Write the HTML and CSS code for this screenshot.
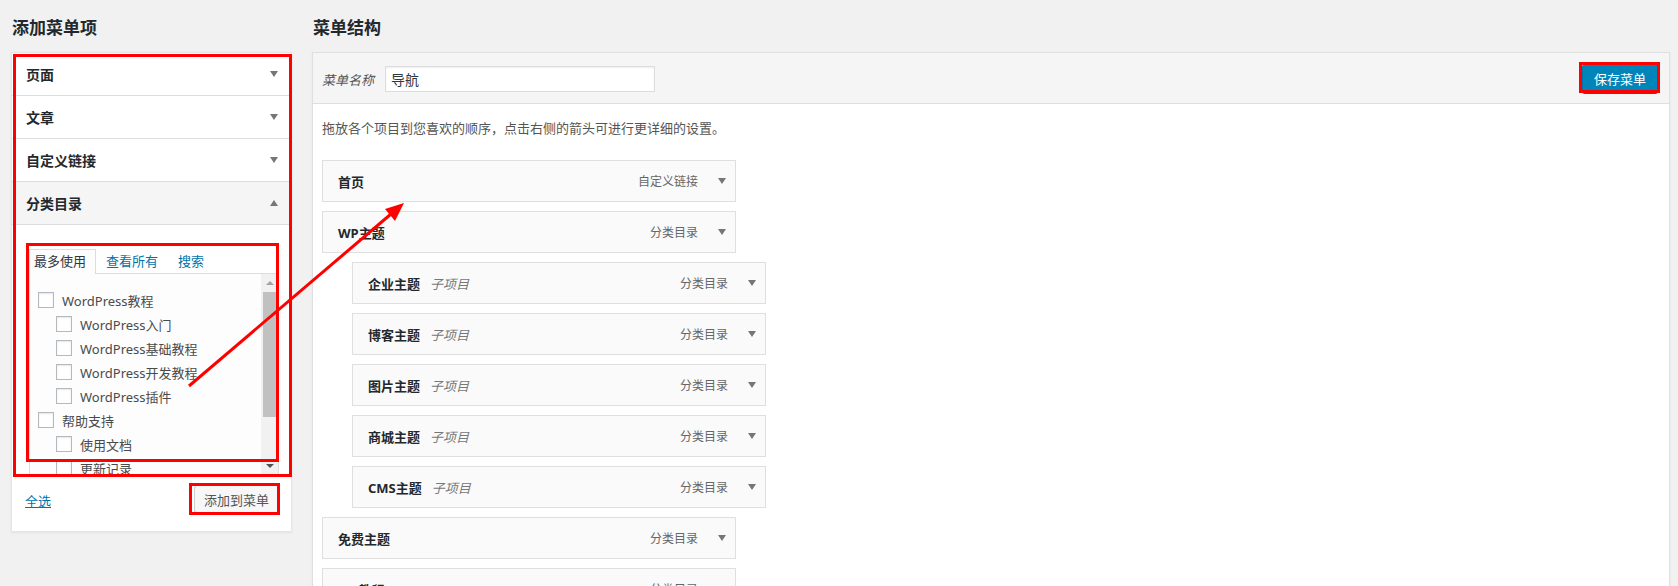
FILE: index.html
```html
<!DOCTYPE html>
<html lang="zh-CN">
<head>
    <meta charset="UTF-8">
    <meta name="viewport" content="width=device-width, initial-scale=1.0">
    <title>菜单</title>
    <link rel="stylesheet" href="styles.css">
</head>
<body>
    <div class="page">
        <!-- Left: add menu items -->
        <div class="col-left">
            <h2>添加菜单项</h2>
            <div class="side-box">
                <div class="accordion">
                    <div class="acc-title">页面<span class="caret"></span></div>
                    <div class="acc-title">文章<span class="caret"></span></div>
                    <div class="acc-title">自定义链接<span class="caret"></span></div>
                    <div class="acc-title open">分类目录<span class="caret up"></span></div>
                    <div class="acc-content">
                        <ul class="tabs">
                            <li class="active">最多使用</li>
                            <li>查看所有</li>
                            <li>搜索</li>
                        </ul>
                        <div class="tab-panel">
                            <ul class="cat-list">
                                <li><span class="check"></span>WordPress教程</li>
                                <li class="child"><span class="check"></span>WordPress入门</li>
                                <li class="child"><span class="check"></span>WordPress基础教程</li>
                                <li class="child"><span class="check"></span>WordPress开发教程</li>
                                <li class="child"><span class="check"></span>WordPress插件</li>
                                <li><span class="check"></span>帮助支持</li>
                                <li class="child"><span class="check"></span>使用文档</li>
                                <li class="child"><span class="check"></span>更新记录</li>
                            </ul>
                            <div class="scrollbar">
                                <span class="sb-btn"><i class="sb-up"></i></span>
                                <span class="sb-track"><span class="sb-thumb"></span></span>
                                <span class="sb-btn"><i class="sb-down"></i></span>
                            </div>
                        </div>
                    </div>
                </div>
                <div class="button-controls">
                    <a href="#" class="select-all">全选</a>
                    <button type="button" class="btn">添加到菜单</button>
                </div>
            </div>
        </div>

        <!-- Right: menu structure -->
        <div class="col-right">
            <h2>菜单结构</h2>
            <div class="menu-box">
                <div class="menu-header">
                    <label for="menuName">菜单名称</label>
                    <input type="text" id="menuName" value="导航">
                    <button type="button" class="btn-primary">保存菜单</button>
                </div>
                <div class="menu-body">
                    <p class="desc">拖放各个项目到您喜欢的顺序，点击右侧的箭头可进行更详细的设置。</p>
                    <ul class="menu-items">
                        <li class="menu-item"><span class="item-title">首页</span><span class="item-type">自定义链接</span><span class="caret"></span></li>
                        <li class="menu-item"><span class="item-title">WP主题</span><span class="item-type">分类目录</span><span class="caret"></span></li>
                        <li class="menu-item sub"><span class="item-title">企业主题</span><em class="sub-tag">子项目</em><span class="item-type">分类目录</span><span class="caret"></span></li>
                        <li class="menu-item sub"><span class="item-title">博客主题</span><em class="sub-tag">子项目</em><span class="item-type">分类目录</span><span class="caret"></span></li>
                        <li class="menu-item sub"><span class="item-title">图片主题</span><em class="sub-tag">子项目</em><span class="item-type">分类目录</span><span class="caret"></span></li>
                        <li class="menu-item sub"><span class="item-title">商城主题</span><em class="sub-tag">子项目</em><span class="item-type">分类目录</span><span class="caret"></span></li>
                        <li class="menu-item sub"><span class="item-title">CMS主题</span><em class="sub-tag">子项目</em><span class="item-type">分类目录</span><span class="caret"></span></li>
                        <li class="menu-item"><span class="item-title">免费主题</span><span class="item-type">分类目录</span><span class="caret"></span></li>
                        <li class="menu-item"><span class="item-title">WP教程</span><span class="item-type">分类目录</span><span class="caret"></span></li>
                        <li class="menu-item"><span class="item-title">帮助支持</span><span class="item-type">分类目录</span><span class="caret"></span></li>
                    </ul>
                </div>
            </div>
        </div>
    </div>

    <!-- Red annotation marks drawn over the screenshot -->
    <div class="annotations">
        <div class="mark mark-accordion"></div>
        <div class="mark mark-tabs"></div>
        <div class="mark mark-add"></div>
        <div class="mark mark-save"></div>
        <svg class="arrow" width="1678" height="586" viewBox="0 0 1678 586">
            <line x1="189" y1="386" x2="391" y2="214" stroke="#ff0000" stroke-width="3"/>
            <polygon points="404,203 395,221 385,209" fill="#ff0000"/>
        </svg>
    </div>
</body>
</html>
```

FILE: styles.css
```css
/* General */
html, body {
    height: 100%;
    overflow: hidden;
}
body {
    margin: 0;
    background-color: #f1f1f1;
    font-family: "Noto Sans", "Noto Sans CJK SC", sans-serif;
    font-size: 13px;
    color: #444;
}
ul {
    list-style: none;
    margin: 0;
    padding: 0;
}
.page {
    display: flex;
    gap: 20px;
    padding: 0 8px 0 11px;
}
h2 {
    font-size: 17px;
    font-weight: bold;
    line-height: 24px;
    color: #23282d;
    margin: 16px 0 12px 1px;
}
.caret {
    width: 0;
    height: 0;
    border-left: 4px solid transparent;
    border-right: 4px solid transparent;
    border-top: 6px solid #72777c;
}
.caret.up {
    border-top: none;
    border-bottom: 6px solid #72777c;
}

/* Left column */
.col-left {
    width: 281px;
    flex-shrink: 0;
}
.side-box {
    background: #fff;
    border: 1px solid #e5e5e5;
    box-shadow: 0 1px 2px rgba(0, 0, 0, 0.06);
}
.acc-title {
    height: 42px;
    border-bottom: 1px solid #dddddd;
    display: flex;
    align-items: center;
    justify-content: space-between;
    padding: 0 13px 0 14px;
    font-size: 14px;
    font-weight: bold;
    color: #23282d;
}
.acc-title.open {
    background: #f5f5f5;
}
.acc-content {
    padding: 24px 12px 1px 17px;
}
/* Tabs */
.tabs {
    display: flex;
    line-height: 23px;
}
.tabs li {
    padding: 0 9px;
    color: #0073aa;
    border: 1px solid transparent;
    border-bottom: none;
}
.tabs li.active {
    padding-left: 4px;
    color: #32373c;
    background: #fdfdfd;
    border-color: #dddddd;
    margin-bottom: -1px;
    position: relative;
}
.tab-panel {
    height: 202px;
    box-sizing: border-box;
    border: 1px solid #dddddd;
    background: #fdfdfd;
    display: flex;
}
.cat-list {
    flex: 1;
    overflow: hidden;
    padding: 14px 0 0 8px;
}
.cat-list li {
    display: flex;
    align-items: center;
    height: 24px;
    color: #4a4a4a;
    white-space: nowrap;
}
.cat-list li.child {
    padding-left: 18px;
}
.check {
    width: 16px;
    height: 16px;
    box-sizing: border-box;
    border: 1px solid #b4b9be;
    background: #fff;
    box-shadow: inset 0 1px 2px rgba(0, 0, 0, 0.1);
    margin-right: 8px;
    flex-shrink: 0;
}
/* Fake scrollbar */
.scrollbar {
    width: 17px;
    background: #f1f1f1;
    display: flex;
    flex-direction: column;
}
.sb-btn {
    height: 17px;
    display: flex;
    align-items: center;
    justify-content: center;
}
.sb-up, .sb-down {
    width: 0;
    height: 0;
    border-left: 4px solid transparent;
    border-right: 4px solid transparent;
}
.sb-up {
    border-bottom: 4px solid #a3a3a3;
}
.sb-down {
    border-top: 4px solid #505050;
}
.sb-track {
    flex: 1;
    padding: 1px 2px;
}
.sb-thumb {
    display: block;
    height: 125px;
    background: #c1c1c1;
}
.button-controls {
    display: flex;
    justify-content: space-between;
    align-items: center;
    padding: 9px 12px 18px 13px;
}
.select-all {
    color: #0073aa;
    text-decoration: underline;
    margin-top: 3px;
}
.btn {
    height: 28px;
    padding: 0 9px;
    font-family: inherit;
    font-size: 13px;
    color: #555;
    background: #f7f7f7;
    border: 1px solid #cccccc;
    border-radius: 3px;
    box-shadow: 0 1px 0 #cccccc;
}

/* Right column */
.col-right {
    flex: 1;
}
.menu-box {
    background: #fff;
    border: 1px solid #dfdfdf;
    box-shadow: 0 1px 2px rgba(0, 0, 0, 0.06);
}
.menu-header {
    height: 50px;
    background: #f5f5f5;
    border-bottom: 1px solid #dfdfdf;
    display: flex;
    align-items: center;
    padding: 0 11px 0 9px;
}
.menu-header label {
    font-style: italic;
    color: #555;
    margin-right: 11px;
    margin-top: 2px;
}
.menu-header input {
    width: 270px;
    height: 26px;
    box-sizing: border-box;
    border: 1px solid #dddddd;
    box-shadow: inset 0 1px 2px rgba(0, 0, 0, 0.07);
    padding: 0 5px;
    font-family: inherit;
    font-size: 14px;
    color: #32373c;
    margin-top: 2px;
}
.btn-primary {
    margin-left: auto;
    height: 29px;
    padding: 0 11px;
    font-family: inherit;
    font-size: 13px;
    color: #fff;
    background: #0085ba;
    border: 1px solid #0073aa;
    border-radius: 3px;
    box-shadow: 0 1px 0 #006799;
}
.menu-body {
    padding: 14px 9px;
}
.desc {
    margin: 0 0 22px;
    line-height: 20px;
    color: #555;
}
.menu-item {
    width: 414px;
    height: 42px;
    box-sizing: border-box;
    border: 1px solid #dfdfdf;
    background: #fafafa;
    margin-bottom: 9px;
    display: flex;
    align-items: center;
    padding: 0 9px 0 15px;
}
.menu-item.sub {
    margin-left: 30px;
}
.item-title {
    font-weight: bold;
    color: #23282d;
}
.sub-tag {
    color: #777;
    margin-left: 10px;
}
.item-type {
    margin-left: auto;
    margin-right: 20px;
    font-size: 12px;
    color: #666;
}

/* Annotations */
.annotations {
    position: absolute;
    top: 0;
    left: 0;
    width: 1678px;
    height: 586px;
    pointer-events: none;
}
.mark {
    position: absolute;
    box-sizing: border-box;
    border: 3px solid #ff0000;
}
.mark-accordion {
    left: 13px;
    top: 54px;
    width: 279px;
    height: 423px;
}
.mark-tabs {
    left: 26px;
    top: 243px;
    width: 253px;
    height: 219px;
}
.mark-add {
    left: 189px;
    top: 483px;
    width: 91px;
    height: 32px;
}
.mark-save {
    left: 1579px;
    top: 62px;
    width: 81px;
    height: 31px;
}
.arrow {
    position: absolute;
    top: 0;
    left: 0;
}
```
